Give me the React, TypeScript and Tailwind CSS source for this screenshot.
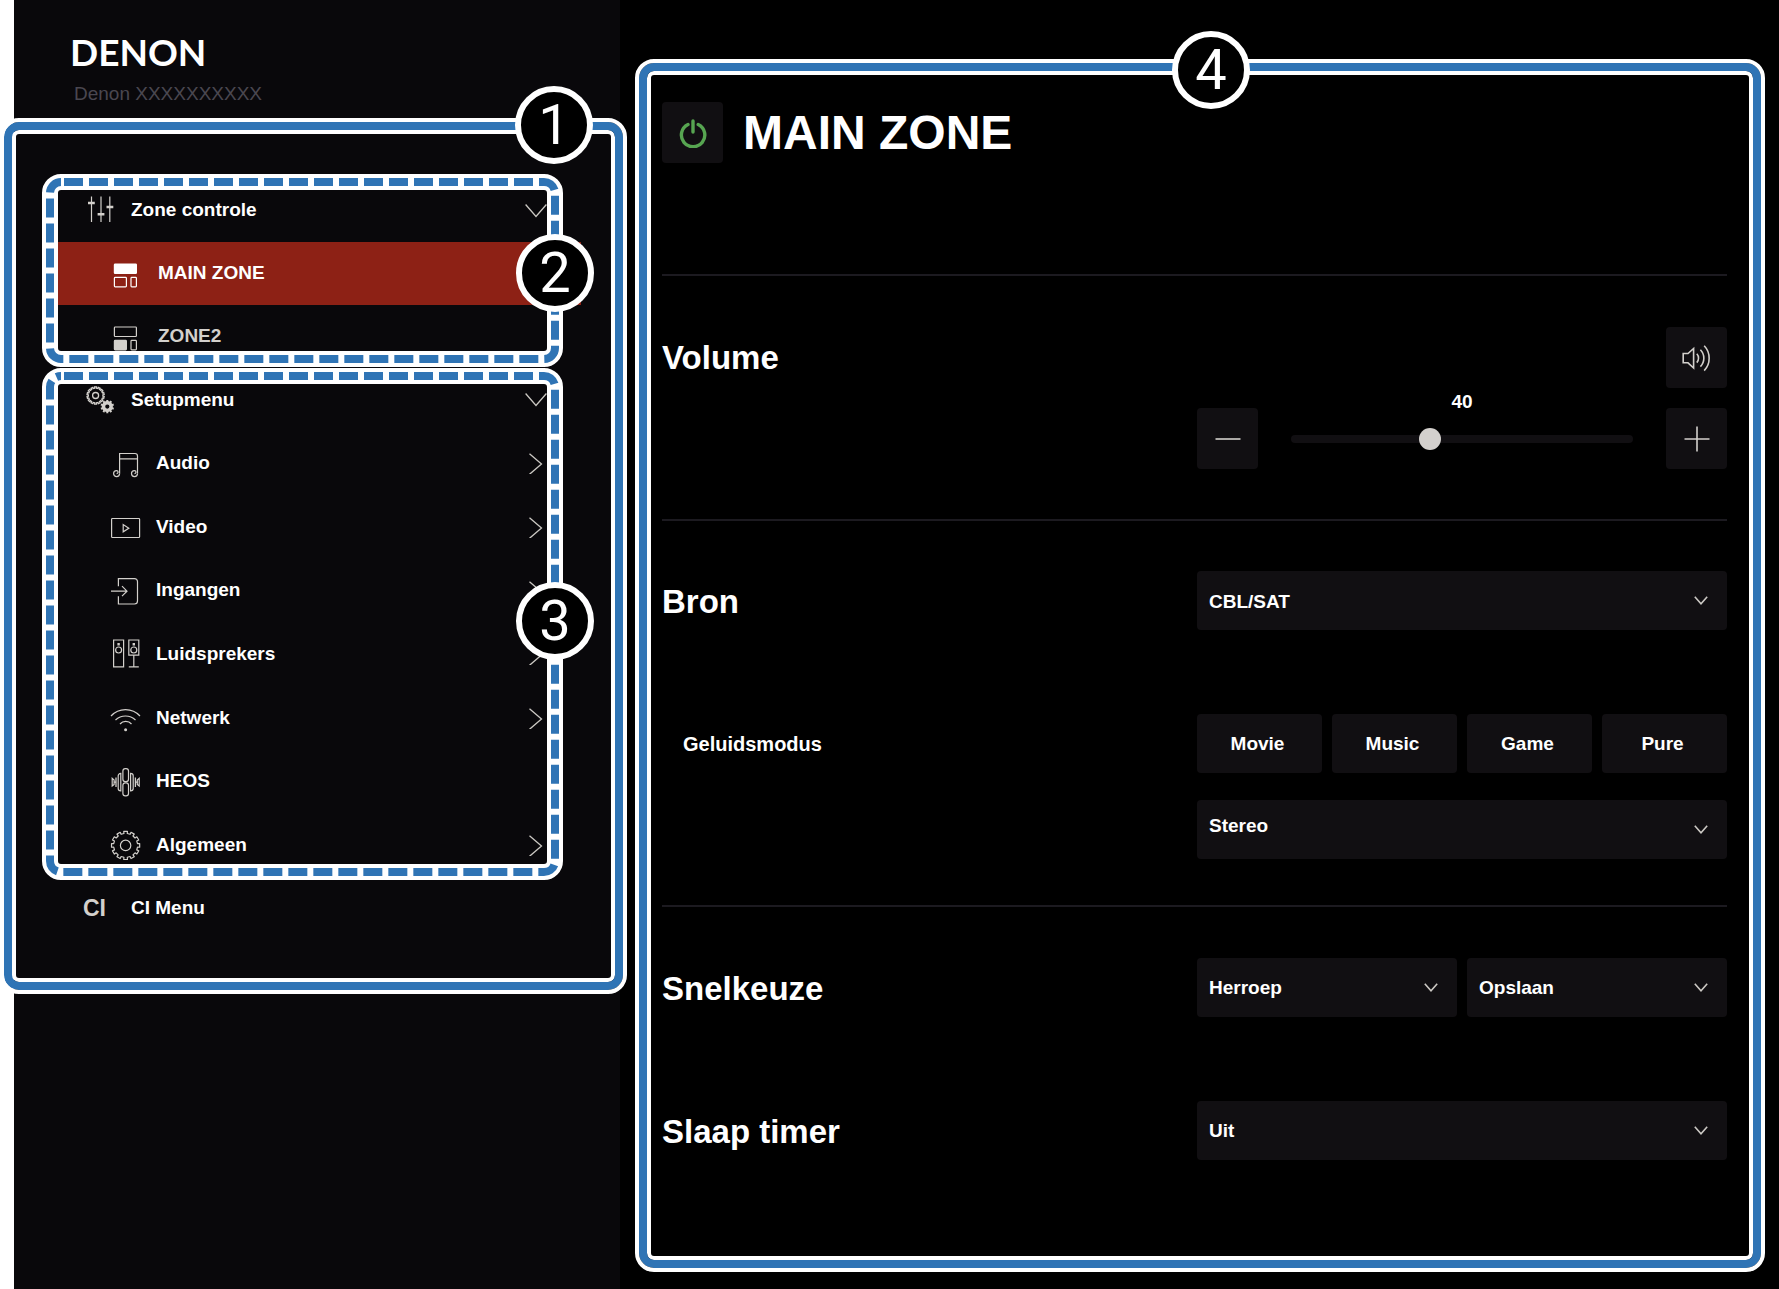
import { useState, type ReactNode } from "react";

/* ---------- icons ---------- */

function gearPath(cx: number, cy: number, outer: number, inner: number, teeth: number) {
  const step = (Math.PI * 2) / teeth;
  const points: string[] = [];
  for (let i = 0; i < teeth; i++) {
    const a = i * step - Math.PI / 2;
    const corners: [number, number][] = [
      [a - step * 0.27, inner],
      [a - step * 0.25, outer],
      [a + step * 0.25, outer],
      [a + step * 0.27, inner],
    ];
    for (const [angle, r] of corners) {
      points.push(`${(cx + r * Math.cos(angle)).toFixed(2)} ${(cy + r * Math.sin(angle)).toFixed(2)}`);
    }
  }
  return `M${points.join("L")}Z`;
}

function Icon({ children, className = "text-[#d3d0cc]" }: { children: ReactNode; className?: string }) {
  return (
    <svg
      viewBox="0 -1 30 30"
      fill="none"
      stroke="currentColor"
      strokeWidth="1.2"
      aria-hidden="true"
      className={`size-[30px] shrink-0 overflow-visible ${className}`}
    >
      {children}
    </svg>
  );
}

const SlidersIcon = () => (
  <Icon>
    <path d="M6.5 -.5V25M16 -.5V25M24.8 -.5V25" />
    <path d="M3 6h6.8M12.6 17.3h6.8M21.5 10h6.8" strokeWidth="2.6" />
  </Icon>
);

const GearsIcon = () => (
  <Icon>
    <path d={gearPath(10.6, 9.5, 8.6, 7.3, 14)} strokeWidth="1.3" />
    <circle cx="10.6" cy="9.500" r="3" strokeWidth="1.3" />
    <path
      fillRule="evenodd"
      fill="currentColor"
      stroke="none"
      d={`${gearPath(22.3, 20.6, 6.8, 5.6, 10)}M24.4 20.6a2.1 2.1 0 1 0 -4.2 0a2.1 2.1 0 1 0 4.2 0Z`}
    />
  </Icon>
);

const ZoneIcon = ({ main = false }: { main?: boolean }) => (
  <Icon className={main ? "text-white" : "text-[#d3d0cc]"}>
    <rect x="4.4" y="4" width="22" height="9.5" rx=".8" fill={main ? "currentColor" : "none"} />
    <rect x="4.4" y="17.4" width="12" height="9.5" rx=".8" fill={main ? "none" : "currentColor"} />
    <rect x="21" y="17.4" width="5.4" height="9.5" rx=".8" />
  </Icon>
);

const MusicIcon = () => (
  <Icon>
    <path d="M9.6 24.6V4.5H25a2.5 2.5 0 0 1 2.5 2.5V24.6M9.6 9.8h17.9" />
    <path d="M9.6 24.6a3 3 0 1 1-3-3a1.500 1.500 0 0 1 0 3M27.500 24.600a3 3 0 1 1-3-3a1.500 1.500 0 0 1 0 3" />
  </Icon>
);

const VideoIcon = () => (
  <Icon>
    <rect x="1.600" y="5.500" width="28" height="19" rx=".8" />
    <path d="M13.200 11.600v7.200l5.600-3.600Z" />
  </Icon>
);

const InputIcon = () => (
  <Icon>
    <path d="M8.400 9.300V1.600H24.500a3 3 0 0 1 3 3V24a3 3 0 0 1-3 3H8.400V19.200" />
    <path d="M1 14.200H17M12 9.200l5 5l-5 5" />
  </Icon>
);

const SpeakersIcon = () => (
  <Icon>
    <path d="M3.600 0h10v26.800h-10ZM18.800 0h10v15.200h-10ZM23.800 15.200v11.600M18.800 26.800h10" />
    <circle cx="8.600" cy="10" r="3" />
    <circle cx="23.800" cy="10" r="3" />
    <path d="M7.400 4.200h2.400M22.600 4.200h2.400" strokeWidth="2.400" />
  </Icon>
);

const WifiIcon = () => (
  <Icon>
    <path d="M1 12a19.500 19.500 0 0 1 29 0M5.500 16a14.500 14.500 0 0 1 20 0M10 20a7.500 7.500 0 0 1 11.500 0" />
    <circle cx="15.600" cy="25.700" r="1.500" fill="currentColor" stroke="none" />
  </Icon>
);

const HeosIcon = () => (
  <Icon>
    <rect x="12.900" y=".6" width="5.600" height="13" rx="2.400" />
    <rect x="12.900" y="14.800" width="5.600" height="13" rx="2.400" />
    <path d="M10.800 5.400c-1.600 0-2.600 1-2.600 2.400v12.800c0 1.400 1 2.400 2.600 2.400ZM20.600 5.400c1.600 0 2.600 1 2.600 2.400v12.800c0 1.400-1 2.400-2.600 2.400Z" />
    <path d="M6 9.500v9.400M25.400 9.500v9.400" strokeWidth="1.300" />
    <path d="M2.200 10.400v7.600l1.900-1.600v-4.400ZM29.200 10.400v7.600l-1.900-1.600v-4.400Z" />
    <path d="M4 14.200h2M25.400 14.200h2" />
  </Icon>
);

const SettingsIcon = () => (
  <Icon>
    <path d={gearPath(15.6, 14.4, 14.2, 12, 12)} strokeLinejoin="round" />
    <circle cx="15.600" cy="14.400" r="5.200" />
  </Icon>
);

const ChevronDown = () => (
  <svg viewBox="0 0 22 22" fill="none" stroke="#cbc8c3" strokeWidth="1.300" aria-hidden="true" className="ml-auto size-[22px] shrink-0">
    <path d="M.6 4.500L11 16.500L21.400 4.500" />
  </svg>
);

const ChevronRight = () => (
  <svg viewBox="0 0 22 22" fill="none" stroke="#cbc8c3" strokeWidth="1.300" aria-hidden="true" className="ml-auto size-[22px] shrink-0">
    <path d="M4.500 1.700L16.500 12L4.500 22.300" />
  </svg>
);

/* ---------- callouts ---------- */

function Badge({ children, className }: { children: ReactNode; className: string }) {
  return (
    <span
      className={`absolute flex size-[78px] -translate-x-1/2 -translate-y-1/2 items-center justify-center rounded-full border-[6px] border-white bg-black font-['Liberation_Sans_Narrow','Roboto',sans-serif] text-[56px] leading-none font-normal text-white ${className}`}
    >
      {children}
    </span>
  );
}

function SolidFrame({ className, children }: { className: string; children: ReactNode }) {
  return (
    <div
      className={`pointer-events-none absolute z-20 rounded-[15px] border-8 border-[#2f74b5] inset-ring-4 inset-ring-white outline-4 outline-white ${className}`}
    >
      {children}
    </div>
  );
}

function DashedFrame({ className, children }: { className: string; children: ReactNode }) {
  return (
    <div className={`pointer-events-none absolute z-10 ${className}`}>
      <svg className="size-full overflow-visible" fill="none" aria-hidden="true">
        <rect width="100%" height="100%" rx="11" stroke="white" strokeWidth="16" />
        <rect width="100%" height="100%" rx="11" stroke="#2f74b5" strokeWidth="8" strokeDasharray="19 6" strokeDashoffset="-3" />
      </svg>
      {children}
    </div>
  );
}

/* ---------- sidebar ---------- */

function GroupButton({ icon, label }: { icon: ReactNode; label: string }) {
  return (
    <button type="button" aria-expanded="true" className="flex h-full w-full items-center gap-4 pr-[34px] pl-7 text-left">
      {icon}
      {label}
      <ChevronDown />
    </button>
  );
}

const setupItems: { label: string; icon: ReactNode; nested: boolean }[] = [
  { label: "Audio", icon: <MusicIcon />, nested: true },
  { label: "Video", icon: <VideoIcon />, nested: true },
  { label: "Ingangen", icon: <InputIcon />, nested: true },
  { label: "Luidsprekers", icon: <SpeakersIcon />, nested: true },
  { label: "Netwerk", icon: <WifiIcon />, nested: true },
  { label: "HEOS", icon: <HeosIcon />, nested: false },
  { label: "Algemeen", icon: <SettingsIcon />, nested: true },
];

function Sidebar() {
  return (
    <aside className="w-[606px] shrink-0 bg-[#09080b]">
      <header className="h-[118px] pt-8">
        <div className="pl-14 font-['Lato',sans-serif] text-[37px] leading-10 font-bold">DENON</div>
        <p className="mt-[10px] pl-[60px] text-[19px] leading-6 text-[#4a4750]">Denon XXXXXXXXXX</p>
      </header>

      <nav className="relative pt-[61px] pr-[39px] pb-[54px] pl-[43px] text-[19px] font-bold">
        <SolidFrame className="top-1 -right-[3px] bottom-1 -left-[10px]">
          <Badge className="-top-[5px] left-[542px]">1</Badge>
        </SolidFrame>

        <div className="relative">
          <ul>
            <li className="h-[63px]">
              <GroupButton icon={<SlidersIcon />} label="Zone controle" />
            </li>
            <li className="h-[63px]">
              <a href="#main-zone" aria-current="page" className="flex h-full items-center gap-[18px] bg-[#8d2115] pl-[53px]">
                <ZoneIcon main />
                MAIN ZONE
              </a>
            </li>
            <li className="h-[63px]">
              <a href="#zone2" className="flex h-full items-center gap-[18px] pl-[53px] text-[#d3d0cc]">
                <ZoneIcon />
                ZONE2
              </a>
            </li>
          </ul>
          <DashedFrame className="top-[3px] right-[26px] bottom-[9px] -left-[7px]">
            <Badge className="top-[91px] left-full">2</Badge>
          </DashedFrame>
        </div>

        <div className="relative">
          <ul className="grid min-h-[509px] grid-rows-8">
            <li>
              <GroupButton icon={<GearsIcon />} label="Setupmenu" />
            </li>
            {setupItems.map((item) => (
              <li key={item.label}>
                <a href={`#${item.label.toLowerCase()}`} className="flex h-full items-center gap-4 pr-[34px] pl-[53px]">
                  {item.icon}
                  {item.label}
                  {item.nested && <ChevronRight />}
                </a>
              </li>
            ))}
          </ul>
          <DashedFrame className="top-2 right-[26px] bottom-[5px] -left-[7px]">
            <Badge className="top-[245px] left-full">3</Badge>
          </DashedFrame>
        </div>

        <a href="#ci-menu" className="flex h-[63px] items-center pl-[26px]">
          <span aria-hidden="true" className="w-12 text-[23px] text-[#d3d0cc]">CI</span>
          CI Menu
        </a>
      </nav>
    </aside>
  );
}

/* ---------- main panel ---------- */

function Select({ id, label, value, className = "pt-0.5" }: { id: string; label: string; value: string; className?: string }) {
  return (
    <div className="relative">
      <select
        id={id}
        aria-label={label}
        defaultValue={value}
        className={`h-[59px] w-full appearance-none rounded bg-[#110f12] pl-3 text-[19px] font-bold text-white ${className}`}
      >
        <option>{value}</option>
      </select>
      <svg viewBox="0 0 14 9" fill="none" stroke="#cbc8c3" strokeWidth="1.600" aria-hidden="true" className="pointer-events-none absolute top-[25px] right-[19px] h-[9px] w-[14px]">
        <path d="M.8 .8L7 7.800L13.200 .8" />
      </svg>
    </div>
  );
}

function SquareButton({ label, onClick, children }: { label: string; onClick?: () => void; children: ReactNode }) {
  return (
    <button type="button" aria-label={label} onClick={onClick} className="flex size-[61px] shrink-0 items-center justify-center rounded bg-[#110f12]">
      {children}
    </button>
  );
}

function Row({ title, children }: { title: ReactNode; children: ReactNode }) {
  return (
    <div className="grid grid-cols-2 gap-x-[5px]">
      {title}
      <div>{children}</div>
    </div>
  );
}

const headingClass = "flex h-[61px] items-center text-[33px] leading-10 font-bold";

export default function App() {
  const [volume, setVolume] = useState(40);
  const changeVolume = (delta: number) => setVolume((v) => Math.min(100, Math.max(0, v + delta)));

  return (
    <div className="flex min-h-screen bg-black pl-[14px] font-['Liberation_Sans',Arial,sans-serif] text-white shadow-[inset_14px_0_0_white]">
      <Sidebar />

      <main className="flex flex-1 pt-[59px] pr-[14px] pb-[17px] pl-[15px]">
        <div className="relative flex-1 pt-[43px] pr-[38px] pl-[27px]">
          <SolidFrame className="inset-1">
            <Badge className="-top-[1px] left-[564px]">4</Badge>
          </SolidFrame>

          <header className="flex h-[172px] items-start gap-5">
            <SquareButton label="Power">
              <svg viewBox="0 0 30 30" fill="none" stroke="#57a551" strokeWidth="3.400" strokeLinecap="round" aria-hidden="true" className="size-[30px]">
                <path d="M10 6.500A11.700 11.700 0 1 0 20.200 6.500M15 3V14" />
              </svg>
            </SquareButton>
            <h1 className="text-[48px] leading-[61px] font-bold">MAIN ZONE</h1>
          </header>

          <section className="border-t-2 border-[#1c1a20] pt-[51px] pb-[50px]">
            <Row title={<h2 className={headingClass}>Volume</h2>}>
              <div className="flex justify-end">
                <SquareButton label="Dempen">
                  <svg viewBox="0 0 30 30" fill="none" stroke="#d3d0cc" strokeWidth="1.600" aria-hidden="true" className="size-[30px]">
                    <path d="M1.200 10.500H6L11.600 5.500V25L6 19.800H1.200Z" />
                    <path d="M14.800 10.800a6.500 6.500 0 0 1 0 8.800M18.400 6.800a12 12 0 0 1 0 16.800M22.200 2.800a18 18 0 0 1 0 24.800" />
                  </svg>
                </SquareButton>
              </div>
              <div className="mt-5 flex items-center gap-[33px]">
                <SquareButton label="Volume omlaag" onClick={() => changeVolume(-1)}>
                  <svg viewBox="0 0 26 26" stroke="#d3d0cc" strokeWidth="1.600" aria-hidden="true" className="size-[26px]">
                    <path d="M.5 13h25" />
                  </svg>
                </SquareButton>
                <div className="relative flex flex-1 items-center">
                  <output htmlFor="volume" className="absolute inset-x-0 bottom-[38px] text-center text-[19px] leading-5 font-bold">
                    {volume}
                  </output>
                  <input
                    id="volume"
                    type="range"
                    min="0"
                    max="100"
                    aria-label="Volume"
                    value={volume}
                    onChange={(e) => setVolume(Number(e.target.value))}
                    className="h-[22px] w-full appearance-none bg-transparent [&::-webkit-slider-runnable-track]:h-2 [&::-webkit-slider-runnable-track]:rounded-full [&::-webkit-slider-runnable-track]:bg-[#110f12] [&::-webkit-slider-thumb]:-mt-[7px] [&::-webkit-slider-thumb]:size-[22px] [&::-webkit-slider-thumb]:appearance-none [&::-webkit-slider-thumb]:rounded-full [&::-webkit-slider-thumb]:bg-[#d3d0cd]"
                  />
                </div>
                <SquareButton label="Volume omhoog" onClick={() => changeVolume(1)}>
                  <svg viewBox="0 0 26 26" stroke="#d3d0cc" strokeWidth="1.600" aria-hidden="true" className="size-[26px]">
                    <path d="M.5 13h25M13 .5v25" />
                  </svg>
                </SquareButton>
              </div>
            </Row>
          </section>

          <section className="border-t-2 border-[#1c1a20] pt-[50px] pb-[46px]">
            <Row title={<h2 className={headingClass}>Bron</h2>}>
              <Select id="source" label="Bron" value="CBL/SAT" className="pt-1" />
            </Row>
            <div className="mt-[82px]">
              <Row title={<h3 className="flex h-[59px] items-center pl-[21px] text-[20px] font-bold">Geluidsmodus</h3>}>
                <div className="grid grid-cols-4 gap-[10px]">
                  {["Movie", "Music", "Game", "Pure"].map((mode) => (
                    <button key={mode} type="button" className="h-[59px] rounded bg-[#110f12] pt-0.5 pr-1 text-[19px] font-bold">
                      {mode}
                    </button>
                  ))}
                </div>
                <div className="mt-[27px]">
                  <Select id="sound-mode" label="Geluidsmodus" value="Stereo" className="pb-1.5" />
                </div>
              </Row>
            </div>
          </section>

          <section className="border-t-2 border-[#1c1a20] pt-[51px]">
            <Row title={<h2 className={headingClass}>Snelkeuze</h2>}>
              <div className="grid grid-cols-2 gap-[10px]">
                <Select id="recall" label="Snelkeuze herroepen" value="Herroep" />
                <Select id="save" label="Snelkeuze opslaan" value="Opslaan" />
              </div>
            </Row>
            <div className="mt-[82px]">
              <Row title={<h2 className={headingClass}>Slaap timer</h2>}>
                <Select id="sleep-timer" label="Slaap timer" value="Uit" />
              </Row>
            </div>
          </section>
        </div>
      </main>
    </div>
  );
}
